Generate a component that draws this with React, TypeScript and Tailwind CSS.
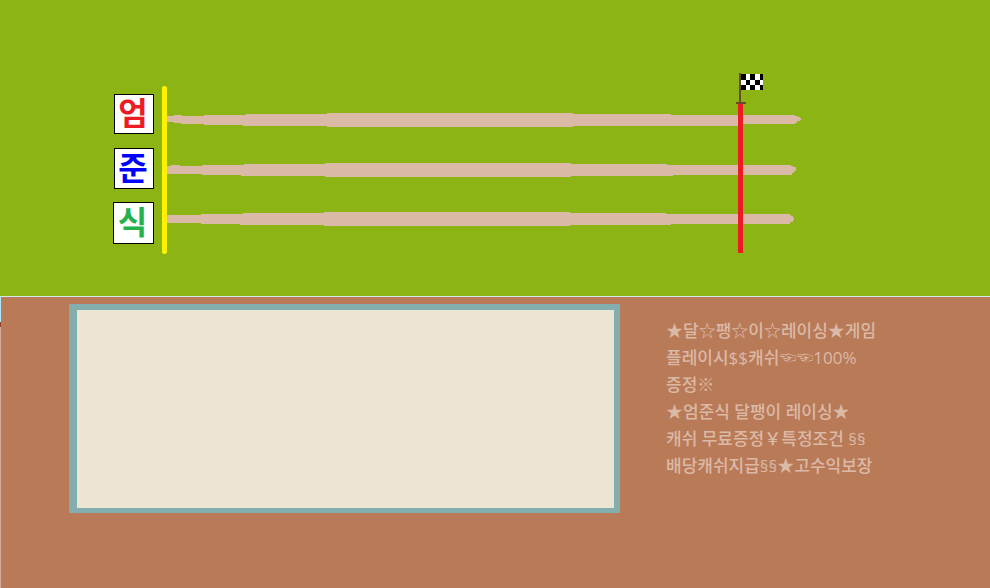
const lines = [
  '★달☆팽☆이☆레이싱★게임',
  '플레이시$$캐쉬☜☜100%',
  '증정※',
  '★엄준식 달팽이 레이싱★',
  '캐쉬 무료증정￥특정조건 §§',
  '배당캐쉬지급§§★고수익보장',
];

const racers = [
  { name: '엄', look: 'h-10 w-10 text-[#ed1c24]' },
  { name: '준', look: 'h-[41px] w-10 text-[#0000ff]' },
  { name: '식', look: 'h-[42px] w-[41px] text-[#22b14c]' },
];

const darkCells = [
  [741, 74, 5, 6], [750, 74, 5, 6], [760, 74, 3, 6],
  [746, 80, 4, 5], [755, 80, 5, 5],
  [741, 85, 5, 5], [750, 85, 5, 5], [760, 85, 3, 5],
];

function Racers() {
  return (
    <ul className="grid auto-rows-[54px] justify-items-end pt-[94px]">
      {racers.map((racer) => (
        <li
          key={racer.name}
          className={`flex items-center justify-center border border-black bg-white pr-0.5 pb-0.5 text-[32px] leading-none font-bold ${racer.look}`}
        >
          {racer.name}
        </li>
      ))}
    </ul>
  );
}

function Track() {
  return (
    <svg
      className="mt-[73px] h-[182px] w-[640px] shrink-0"
      viewBox="162 73 640 182"
      shapeRendering="crispEdges"
      role="img"
      aria-label="Race track"
    >
      <g fill="#dbb9a7">
        <path d="M166 116H174V115H182V116H204V115H246V114H327V113H573V114H671V115H795V116H798V117H800V118H801V120H800V121H797V123H795V124H743V126H672V126H573V127H327V126H243V125H204V124H181V123H174V122H166Z" />
        <path d="M166 166H171V165H180V166H202V165H244V164H325V163H571V164H667V165H791V166H793V167H796V171H794V173H792V175H673V176H571V177H325V176H241V175H202V174H166Z" />
        <path d="M166 215H201V214H243V213H324V212H570V213H666V214H790V215H791V216H793V218H794V220H793V222H790V224H671V225H570V226H324V225H240V224H201V223H166Z" />
      </g>
      <path fill="#fff200" d="M163 86H166V87H167V253H166V254H163V253H162V87H163Z" />
      <path fill="#ed1c24" d="M738 104H743V253H738Z" />
      <path fill="#6b4a2b" d="M739 73H741V102H746V104H736V102H739Z" />
      <rect x="741" y="74" width="22" height="16" fill="#fff" />
      {darkCells.map(([x, y, w, h]) => (
        <rect key={`${x}-${y}`} x={x} y={y} width={w} height={h} fill="#000" />
      ))}
    </svg>
  );
}

export default function App() {
  return (
    <main className="flex min-h-screen flex-col bg-[#b97a57] font-['Open_Sans','Noto_Sans_CJK_KR','DejaVu_Sans',sans-serif]">
      <section className="flex h-[296px] items-start gap-2 overflow-hidden bg-[#8cb414] pl-[113px]">
        <Racers />
        <Track />
      </section>
      <section className="flex grow border-t border-[#d3eaf0]">
        <div className="flex w-px flex-col">
          <span className="h-[25px] bg-[#b5e6f5]" />
          <span className="h-[5px] bg-[#8f4526]" />
          <span className="grow bg-[#d4ab98]" />
        </div>
        <div className="flex grow items-start gap-[46px] pt-[7px] pl-[68px]">
          <div className="h-[209px] w-[551px] shrink-0 border-t-[6px] border-r-[6px] border-b-[5px] border-l-8 border-[#82aeae] bg-[#ece5d3]" />
          <div className="pt-[13px] text-[17px] leading-[27px] font-medium whitespace-nowrap text-[#dbb9a7]">
            {lines.map((line) => (
              <p key={line}>{line}</p>
            ))}
          </div>
        </div>
      </section>
    </main>
  );
}
